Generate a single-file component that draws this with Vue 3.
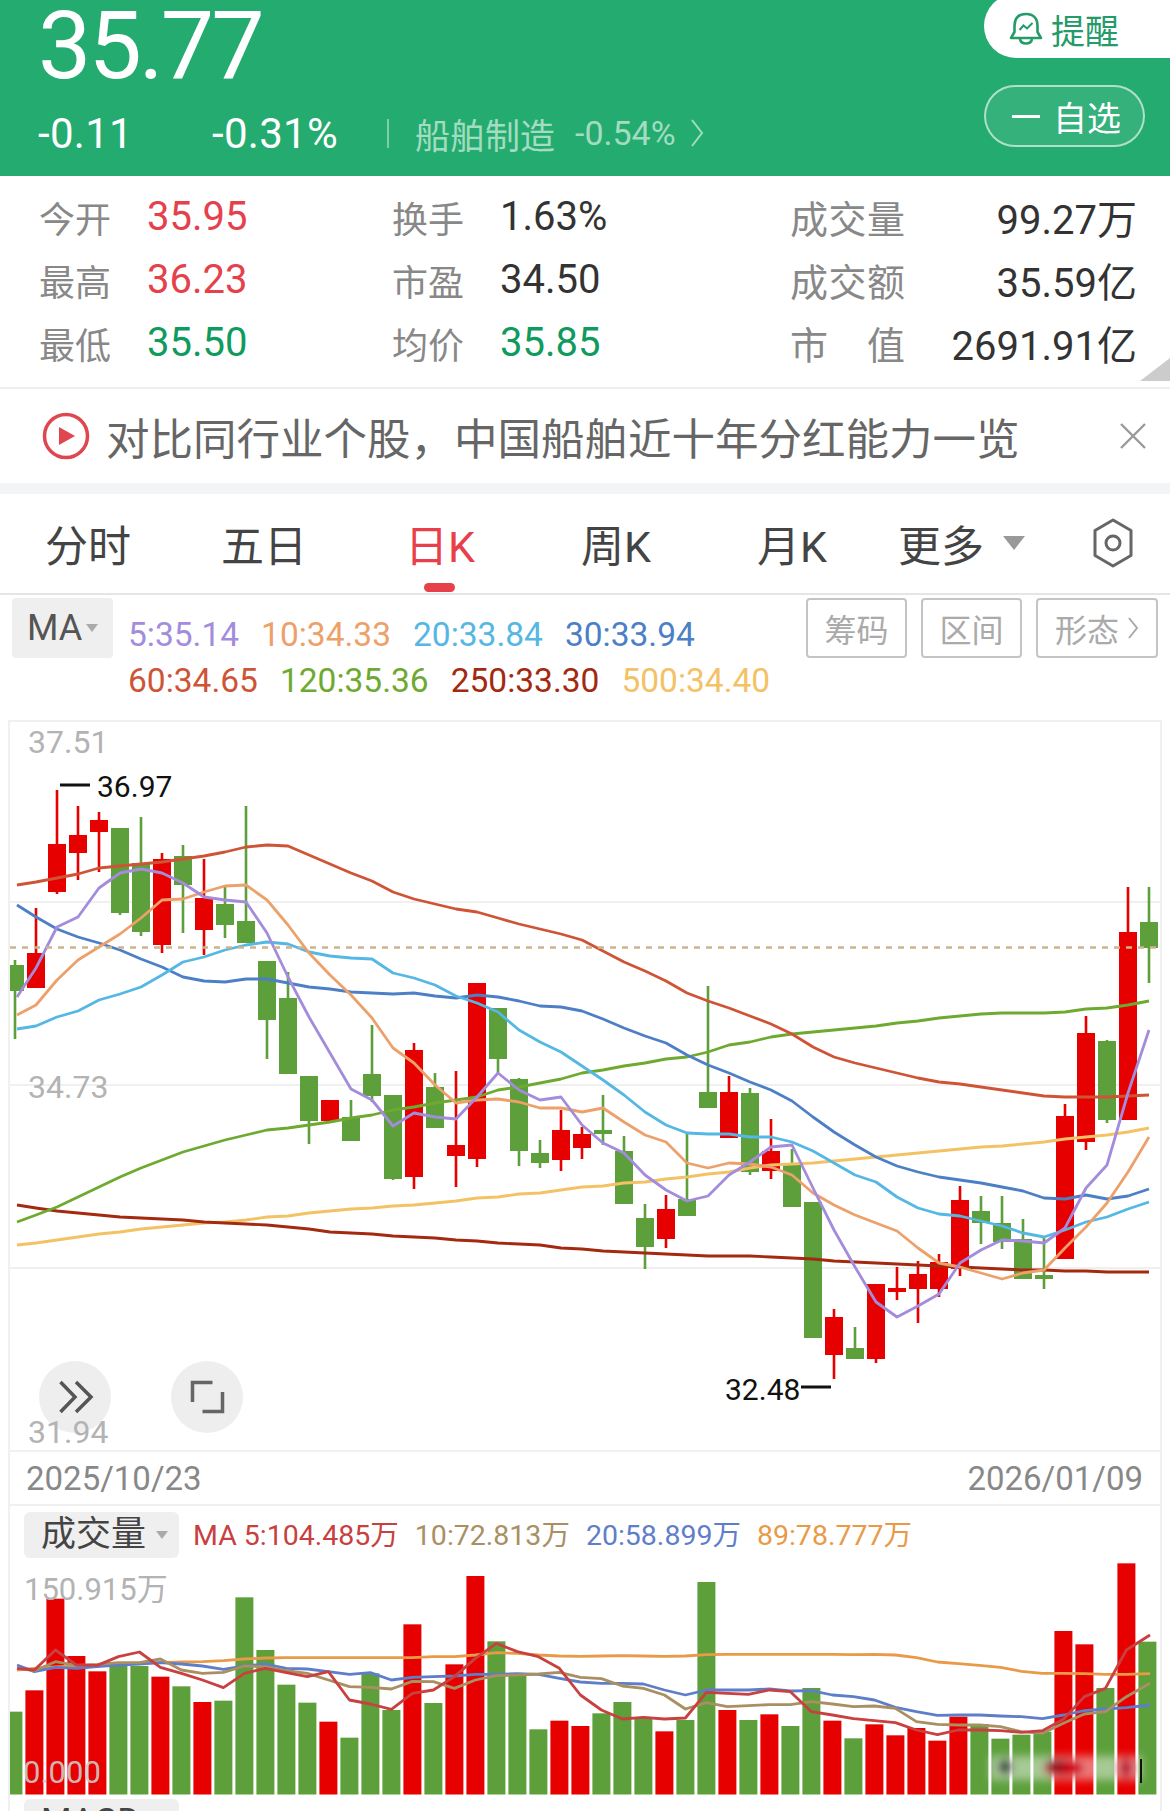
<script setup>
const stats = [
  [{ k: '今开', v: '35.95', c: 'red' }, { k: '换手', v: '1.63%', c: '' }, { k: '成交量', v: '99.27万', c: '' }],
  [{ k: '最高', v: '36.23', c: 'red' }, { k: '市盈', v: '34.50', c: '' }, { k: '成交额', v: '35.59亿', c: '' }],
  [{ k: '最低', v: '35.50', c: 'green' }, { k: '均价', v: '35.85', c: 'green' }, { k: '市值', v: '2691.91亿', c: '' }]
]
const tabs = ['分时', '五日', '日K', '周K', '月K']
const legendTop = [
  { t: '5:35.14', c: '#a48cdc' }, { t: '10:34.33', c: '#eda16a' },
  { t: '20:33.84', c: '#55b7e3' }, { t: '30:33.94', c: '#4c7fc5' }
]
const legendBottom = [
  { t: '60:34.65', c: '#cf5436' }, { t: '120:35.36', c: '#6daa2f' },
  { t: '250:33.30', c: '#a3290f' }, { t: '500:34.40', c: '#f3c265' }
]
const volLegend = [
  { t: 'MA 5:104.485万', c: '#c8403f' }, { t: '10:72.813万', c: '#a98f62' },
  { t: '20:58.899万', c: '#5f7ec9' }, { t: '89:78.777万', c: '#e89a48' }
]

const RED = '#e60000'
const GREEN = '#5c9f3b'

// bodyTop, bodyBottom, wickTop, wickBottom, up?
const candles = [
  [965, 991, 960, 1039, 0], [953, 988, 908, 988, 1], [844, 892, 790, 894, 1], [835, 853, 806, 880, 1],
  [820, 832, 812, 872, 1], [828, 913, 828, 915, 0], [863, 932, 817, 936, 0], [859, 945, 853, 953, 1],
  [856, 885, 845, 933, 0], [898, 930, 859, 955, 1], [904, 925, 885, 938, 0], [921, 943, 806, 943, 0],
  [961, 1020, 961, 1059, 0], [998, 1074, 972, 1074, 0], [1076, 1121, 1076, 1144, 0], [1100, 1121, 1100, 1123, 1],
  [1117, 1141, 1100, 1141, 0], [1074, 1096, 1025, 1102, 0], [1095, 1179, 1095, 1180, 0], [1050, 1177, 1043, 1189, 1],
  [1087, 1128, 1073, 1128, 0], [1145, 1156, 1071, 1187, 1], [983, 1159, 983, 1167, 1], [1008, 1059, 1008, 1073, 0],
  [1079, 1151, 1078, 1166, 0], [1153, 1163, 1140, 1168, 0], [1130, 1160, 1110, 1171, 1], [1134, 1148, 1127, 1159, 1],
  [1130, 1134, 1095, 1145, 0], [1151, 1204, 1136, 1204, 0], [1218, 1247, 1204, 1269, 0], [1209, 1239, 1195, 1248, 1],
  [1199, 1216, 1134, 1216, 0], [1092, 1108, 986, 1108, 0], [1092, 1138, 1076, 1138, 1], [1093, 1172, 1088, 1175, 0],
  [1151, 1171, 1119, 1179, 1], [1163, 1207, 1149, 1207, 0], [1202, 1338, 1202, 1338, 0], [1317, 1355, 1309, 1379, 1],
  [1348, 1359, 1327, 1359, 0], [1284, 1359, 1284, 1363, 1], [1288, 1292, 1267, 1300, 1], [1274, 1289, 1261, 1323, 1],
  [1262, 1289, 1254, 1297, 1], [1200, 1269, 1186, 1276, 1], [1211, 1223, 1196, 1244, 0], [1223, 1242, 1196, 1249, 0],
  [1239, 1279, 1219, 1279, 0], [1275, 1279, 1238, 1289, 0], [1116, 1259, 1104, 1259, 1], [1033, 1142, 1016, 1150, 1],
  [1041, 1120, 1040, 1123, 0], [932, 1120, 887, 1120, 1], [922, 948, 887, 983, 0]
]

const maLines = [
  { c: '#f3c265', y: [1245, 1243, 1240, 1237, 1234, 1232, 1229, 1227, 1225, 1223, 1222, 1220, 1217, 1216, 1213, 1211, 1209, 1208, 1206, 1205, 1203, 1201, 1198, 1197, 1194, 1193, 1190, 1187, 1186, 1183, 1182, 1179, 1177, 1174, 1172, 1168, 1165, 1164, 1163, 1161, 1159, 1157, 1155, 1153, 1151, 1149, 1147, 1146, 1144, 1142, 1139, 1137, 1135, 1132, 1128] },
  { c: '#a3290f', y: [1205, 1208, 1211, 1213, 1215, 1217, 1218, 1219, 1220, 1222, 1223, 1224, 1225, 1227, 1229, 1232, 1233, 1234, 1236, 1237, 1238, 1240, 1241, 1243, 1244, 1245, 1248, 1249, 1251, 1252, 1253, 1254, 1255, 1256, 1256, 1256, 1257, 1258, 1259, 1261, 1262, 1263, 1264, 1265, 1266, 1267, 1268, 1269, 1270, 1270, 1271, 1271, 1272, 1272, 1272] },
  { c: '#6daa2f', y: [1222, 1215, 1207, 1197, 1187, 1177, 1168, 1160, 1152, 1146, 1140, 1135, 1130, 1128, 1125, 1122, 1118, 1115, 1110, 1107, 1103, 1100, 1097, 1090, 1087, 1083, 1079, 1073, 1070, 1066, 1063, 1059, 1057, 1052, 1045, 1042, 1037, 1034, 1032, 1030, 1028, 1026, 1023, 1021, 1018, 1016, 1014, 1013, 1013, 1013, 1012, 1009, 1008, 1005, 1001] },
  { c: '#cf5436', y: [885, 882, 878, 874, 868, 866, 864, 862, 859, 856, 852, 847, 845, 846, 855, 864, 873, 881, 892, 899, 904, 909, 912, 918, 924, 929, 934, 940, 951, 962, 971, 981, 993, 1001, 1008, 1016, 1024, 1034, 1047, 1057, 1063, 1068, 1073, 1078, 1082, 1084, 1087, 1090, 1093, 1096, 1097, 1097, 1097, 1096, 1095] },
  { c: '#4c7fc5', y: [905, 917, 929, 937, 943, 950, 959, 967, 977, 981, 982, 979, 979, 983, 987, 989, 992, 993, 994, 993, 996, 998, 995, 997, 1001, 1006, 1007, 1011, 1019, 1028, 1036, 1043, 1055, 1065, 1073, 1082, 1090, 1101, 1117, 1132, 1145, 1157, 1166, 1172, 1177, 1180, 1183, 1187, 1191, 1198, 1199, 1195, 1199, 1196, 1189] },
  { c: '#55b7e3', y: [1029, 1026, 1017, 1011, 1000, 994, 987, 975, 962, 957, 950, 945, 942, 944, 952, 956, 958, 959, 973, 978, 985, 996, 1003, 1012, 1030, 1042, 1052, 1066, 1080, 1095, 1112, 1125, 1133, 1134, 1134, 1137, 1137, 1142, 1151, 1163, 1175, 1182, 1197, 1208, 1214, 1216, 1221, 1226, 1233, 1237, 1230, 1222, 1217, 1209, 1202] },
  { c: '#eda16a', y: [1015, 1005, 980, 960, 947, 934, 918, 900, 899, 892, 886, 885, 900, 925, 953, 975, 995, 1018, 1048, 1063, 1085, 1103, 1100, 1099, 1102, 1108, 1108, 1112, 1108, 1122, 1135, 1142, 1163, 1168, 1163, 1164, 1167, 1175, 1193, 1205, 1215, 1223, 1231, 1248, 1263, 1267, 1273, 1279, 1273, 1270, 1248, 1227, 1203, 1172, 1137] },
  { c: '#a48cdc', y: [997, 968, 927, 917, 888, 873, 869, 873, 883, 897, 900, 902, 933, 977, 1017, 1053, 1089, 1100, 1126, 1113, 1117, 1119, 1097, 1073, 1090, 1100, 1097, 1125, 1143, 1153, 1175, 1190, 1201, 1196, 1175, 1162, 1147, 1145, 1188, 1230, 1267, 1302, 1317, 1306, 1294, 1263, 1250, 1240, 1241, 1243, 1228, 1188, 1165, 1093, 1030] }
]

const volume = [
  [695, 0], [631, 1], [356, 1], [528, 1], [574, 1], [555, 0], [558, 0], [590, 1], [619, 0], [666, 1], [662, 0],
  [352, 0], [510, 0], [614, 0], [668, 0], [725, 1], [773, 0], [580, 0], [690, 0], [433, 1], [669, 0], [553, 1],
  [288, 1], [484, 0], [580, 0], [748, 0], [722, 1], [738, 1], [700, 0], [666, 0], [716, 0], [754, 1], [720, 0],
  [306, 0], [690, 1], [720, 0], [703, 1], [738, 0], [624, 0], [722, 1], [775, 0], [733, 1], [766, 1], [744, 1],
  [782, 1], [710, 1], [732, 0], [776, 0], [764, 0], [755, 0], [453, 1], [493, 1], [624, 0], [250, 1], [485, 0]
].map(([v, up]) => ({ top: 1480 + v / 3, up }))

const volLines = [
  { c: '#e89a48', v: [570, 565, 561, 558, 556, 552, 550, 548, 546, 545, 542, 537, 534, 533, 533, 533, 533, 533, 533, 533, 530, 530, 525, 518, 520, 525, 528, 529, 528, 527, 528, 529, 528, 524, 523, 523, 523, 523, 523, 523, 524, 523, 525, 533, 546, 551, 556, 562, 574, 580, 580, 581, 583, 583, 581] },
  { c: '#5f7ec9', v: [555, 575, 562, 565, 560, 555, 552, 548, 552, 558, 568, 558, 552, 565, 567, 575, 583, 578, 600, 592, 590, 588, 583, 583, 581, 583, 595, 606, 610, 610, 612, 630, 645, 630, 630, 630, 627, 633, 632, 645, 650, 660, 682, 695, 706, 705, 705, 708, 710, 716, 705, 692, 687, 683, 675] },
  { c: '#a98f62', v: [565, 572, 545, 556, 553, 548, 548, 537, 570, 580, 577, 558, 560, 572, 580, 600, 620, 622, 627, 604, 605, 625, 600, 587, 585, 582, 577, 592, 596, 618, 625, 645, 687, 668, 680, 677, 674, 674, 665, 672, 680, 678, 685, 725, 733, 735, 735, 740, 755, 760, 730, 702, 695, 650, 610] },
  { c: '#c8403f', v: [565, 570, 510, 555, 556, 530, 516, 562, 580, 600, 623, 580, 565, 578, 590, 575, 660, 672, 688, 640, 630, 590, 535, 490, 515, 530, 565, 645, 690, 717, 712, 717, 714, 637, 640, 643, 630, 635, 695, 705, 716, 722, 728, 750, 764, 750, 750, 752, 757, 752, 718, 650, 625, 510, 465] }
]

const candleX = i => 15 + 21 * i
const volX = i => 13.4 + 21 * i

const maPoints = ys => ys.map((y, i) => `${i === 0 ? 17 : candleX(i)},${y}`).join(' ')
const volPoints = vs => vs.map((v, i) => `${i === 0 ? 17 : i === 54 ? 1150 : volX(i)},${1480 + v / 3}`).join(' ')
</script>

<template>
  <div class="page">
    <header class="head">
      <div class="head-left">
        <div class="price">35.77</div>
        <div class="change">
          <span class="chg-a">-0.11</span>
          <span class="chg-b">-0.31%</span>
          <i class="vline"></i>
          <span class="sector">船舶制造</span>
          <span class="sector-pct">-0.54%</span>
          <svg class="chev" width="14" height="30" viewBox="0 0 14 30">
            <path d="M2 2 L12 15 L2 28" fill="none" stroke="#a3dcc0" stroke-width="2" />
          </svg>
        </div>
      </div>
      <div class="head-right">
        <div class="remind">
          <svg width="34" height="34" viewBox="0 0 34 34" fill="none" stroke="#249b68" stroke-width="2.6">
            <path d="M17 2 C8 2 5.5 8 5.5 14 V20 L2 26 H32 L28.5 20 V14 C28.5 8 26 2 17 2 Z" stroke-linejoin="round" />
            <path d="M11 27 C12 33 22 33 23 27" />
            <path d="M10.5 18 L14.5 13.5 L18 16.5 L23.5 11" stroke-width="2" />
          </svg>
          <span>提醒</span>
        </div>
        <div class="watch"><i class="minus"></i><span>自选</span></div>
      </div>
    </header>

    <section class="stats">
      <div v-for="(row, r) in stats" :key="r" class="stat-row">
        <div v-for="item in row" :key="item.k" class="stat">
          <span class="stat-k">{{ item.k }}</span>
          <span class="stat-v" :class="item.c">{{ item.v }}</span>
        </div>
      </div>
      <i class="corner"></i>
    </section>

    <section class="news">
      <svg width="48" height="48" viewBox="0 0 48 48">
        <circle cx="24" cy="24" r="21.5" fill="none" stroke="#e0464f" stroke-width="3.5" />
        <path d="M17 15 L33 24 L17 33 Z" fill="#e0464f" />
      </svg>
      <span class="news-text">对比同行业个股，中国船舶近十年分红能力一览</span>
      <svg class="news-close" width="26" height="26" viewBox="0 0 26 26">
        <path d="M1 1 L25 25 M25 1 L1 25" stroke="#999" stroke-width="2.4" />
      </svg>
    </section>
    <div class="band"></div>

    <nav class="tabs">
      <div v-for="t in tabs" :key="t" class="tab" :class="{ active: t === '日K' }">
        {{ t }}
        <i v-if="t === '日K'" class="tab-mark"></i>
      </div>
      <div class="tab more">更多<i class="tri big"></i></div>
      <svg class="gear" width="46" height="50" viewBox="0 0 46 50" fill="none" stroke="#666" stroke-width="3">
        <path d="M23 2 L41 12.500 V37.500 L23 48 L5 37.500 V12.500 Z" stroke-linejoin="round" />
        <circle cx="23" cy="25" r="7" />
      </svg>
    </nav>

    <section class="legend">
      <div class="ma-chip">MA<i class="tri"></i></div>
      <div class="ma-rows">
        <div class="ma-row">
          <span v-for="m in legendTop" :key="m.t" :style="{ color: m.c }">{{ m.t }}</span>
        </div>
        <div class="ma-row">
          <span v-for="m in legendBottom" :key="m.t" :style="{ color: m.c }">{{ m.t }}</span>
        </div>
      </div>
      <div class="tools">
        <div class="tool">筹码</div>
        <div class="tool">区间</div>
        <div class="tool wide">
          形态
          <svg width="12" height="24" viewBox="0 0 12 24">
            <path d="M2 2 L10 12 L2 22" fill="none" stroke="#aaa" stroke-width="2" />
          </svg>
        </div>
      </div>
    </section>

    <div class="frame">
      <svg class="kline" width="1150" height="728" viewBox="10 722 1150 728">
        <g stroke="#f0f0f0" stroke-width="2">
          <line x1="10" x2="1160" y1="902" y2="902" />
          <line x1="10" x2="1160" y1="1085" y2="1085" />
          <line x1="10" x2="1160" y1="1268" y2="1268" />
        </g>
        <g v-for="(c, i) in candles" :key="i" :fill="c[4] ? RED : GREEN">
          <rect :x="candleX(i) - 1.3" :y="c[2]" width="2.600" :height="c[3] - c[2]" />
          <rect :x="candleX(i) - 9" :y="c[0]" width="18" :height="c[1] - c[0]" />
        </g>
        <polyline v-for="l in maLines" :key="l.c" :points="maPoints(l.y)" fill="none" :stroke="l.c" stroke-width="2.800" stroke-linejoin="round" />
        <line x1="10" x2="1160" y1="947.500" y2="947.500" stroke="#cdb48c" stroke-width="2.500" stroke-dasharray="6 6" />

        <text x="28" y="753" class="axis">37.51</text>
        <text x="28" y="1098" class="axis">34.73</text>
        <text x="97" y="797" class="mark">36.97</text>
        <line x1="60" x2="90" y1="785" y2="785" stroke="#111" stroke-width="3" />
        <text x="725" y="1400" class="mark">32.48</text>
        <line x1="801" x2="831" y1="1387" y2="1387" stroke="#111" stroke-width="3" />

        <circle cx="75" cy="1397" r="36" fill="#eeeeee" />
        <circle cx="207" cy="1397" r="36" fill="#eeeeee" />
        <path d="M60.500 1382 L75 1397 L60.500 1412 M76 1382 L91 1397 L76 1412" fill="none" stroke="#555" stroke-width="3.500" />
        <path d="M192.500 1402 V1382.500 H212.500 M222.500 1392 V1411.500 H202.500" fill="none" stroke="#666" stroke-width="3.500" />
        <text x="28" y="1443" class="axis">31.94</text>
      </svg>

      <div class="dates">
        <span>2025/10/23</span>
        <span>2026/01/09</span>
      </div>

      <div class="vol-head">
        <div class="vol-chip">成交量<i class="tri"></i></div>
        <span v-for="m in volLegend" :key="m.t" :style="{ color: m.c }">{{ m.t }}</span>
      </div>

      <svg class="vol" width="1150" height="237" viewBox="10 1558 1150 237">
        <defs>
          <filter id="smear" x="-30%" y="-60%" width="160%" height="220%">
            <feGaussianBlur stdDeviation="4" />
          </filter>
        </defs>
        <rect v-for="(b, i) in volume" :key="i" :x="volX(i) - 9" :y="b.top" width="18" :height="1794.500 - b.top" :fill="b.up ? RED : GREEN" />
        <polyline v-for="l in volLines" :key="l.c" :points="volPoints(l.v)" fill="none" :stroke="l.c" stroke-width="2.800" stroke-linejoin="round" />
        <g filter="url(#smear)">
          <rect x="990" y="1756" width="152" height="24" fill="#fff" opacity="0.45" />
          <ellipse cx="1005" cy="1767" rx="8" ry="8" fill="#33502e" />
          <ellipse cx="1065" cy="1768" rx="22" ry="10" fill="#d4001a" />
          <ellipse cx="1055" cy="1766" rx="10" ry="7" fill="#8e1018" />
          <ellipse cx="1126" cy="1768" rx="9" ry="11" fill="#c22038" />
        </g>
        <line x1="1141" x2="1141" y1="1759" y2="1783" stroke="#111" stroke-width="2" />
        <text x="24" y="1600" class="axis vol-axis">150.915万</text>
        <text x="23" y="1783" class="axis zero">0.000</text>
      </svg>

      <div class="macd-chip">MACD</div>
    </div>
  </div>
</template>

<style scoped>
.page {
  width: 1170px;
  height: 1811px;
  overflow: hidden;
  background: #fff;
  font-family: Roboto, "Noto Sans CJK SC", sans-serif;
  color: #333;
}
i {
  display: block;
}
.head {
  height: 176px;
  background: #24ab70;
  display: flex;
  justify-content: space-between;
  color: #fff;
}
.head-left {
  padding-left: 38px;
}
.price {
  font-size: 95px;
  line-height: 91px;
  letter-spacing: -3px;
}
.change {
  display: flex;
  align-items: center;
  margin-top: 17px;
  height: 50px;
}
.chg-a,
.chg-b {
  font-size: 42px;
  letter-spacing: 0.3px;
}
.chg-a {
  width: 174px;
}
.chg-b {
  width: 175px;
}
.vline {
  width: 2px;
  height: 29px;
  background: #7fcca7;
}
.sector {
  margin-left: 26px;
  font-size: 35px;
  color: #a3dcc0;
}
.sector-pct {
  margin-left: 20px;
  font-size: 34px;
  color: #a3dcc0;
}
.chev {
  margin-left: 14px;
}
.head-right {
  width: 186px;
}
.remind {
  height: 64px;
  margin-top: -6px;
  background: #fff;
  border-radius: 32px 0 0 32px;
  display: flex;
  align-items: center;
  gap: 8px;
  padding: 6px 0 0 25px;
  box-sizing: border-box;
  color: #249b68;
  font-size: 34px;
}
.watch {
  width: 161px;
  height: 62px;
  margin-top: 27px;
  box-sizing: border-box;
  border: 2px solid rgba(255, 255, 255, 0.6);
  border-radius: 31px;
  background: rgba(255, 255, 255, 0.08);
  display: flex;
  align-items: center;
  gap: 13px;
  padding-left: 26px;
  font-size: 34px;
}
.minus {
  width: 28px;
  height: 3px;
  background: #fff;
}

.stats {
  position: relative;
  height: 213px;
  box-sizing: border-box;
  padding-top: 9px;
  border-bottom: 2px solid #eeeeee;
}
.stat-row {
  display: grid;
  grid-template-columns: 353px 398px 347px;
  height: 63px;
  padding-left: 39px;
}
.stat {
  display: flex;
  align-items: center;
}
.stat-k {
  width: 108px;
  font-size: 36px;
  color: #888;
}
.stat-v {
  font-size: 40px;
  color: #333;
}
.stat:nth-child(3) {
  justify-content: space-between;
}
.stat:nth-child(3) .stat-k {
  width: 115px;
  font-size: 38px;
  text-align-last: justify;
}
.stat-v.red {
  color: #e5414c;
}
.stat-v.green {
  color: #0f9a5e;
}
.corner {
  position: absolute;
  right: 0;
  bottom: 6px;
  width: 30px;
  height: 23px;
  background: #cccccc;
  clip-path: polygon(100% 0, 100% 100%, 0 100%);
}

.news {
  height: 94px;
  display: flex;
  align-items: center;
  padding-left: 42px;
  gap: 16px;
}
.news-text {
  font-size: 43.500px;
  color: #666;
  white-space: nowrap;
}
.news-close {
  margin-left: 84px;
}
.band {
  height: 11px;
  background: #f2f4f6;
}

.tabs {
  position: relative;
  height: 101px;
  box-sizing: border-box;
  border-bottom: 2px solid #e5e5e5;
  display: flex;
  align-items: center;
  padding-bottom: 2px;
}
.tab {
  position: relative;
  width: 176px;
  text-align: center;
  font-size: 43px;
  color: #444;
}
.tab.active {
  color: #e8404a;
}
.tab-mark {
  position: absolute;
  left: 72px;
  bottom: -18px;
  width: 31px;
  height: 9px;
  border-radius: 5px;
  background: #e8404a;
}
.more {
  display: flex;
  align-items: center;
  width: 190px;
  padding-left: 18px;
  box-sizing: border-box;
}
.tri {
  width: 0;
  height: 0;
  border-left: 6px solid transparent;
  border-right: 6px solid transparent;
  border-top: 8px solid #aaa;
  margin-left: 4px;
}
.tri.big {
  border-left-width: 11px;
  border-right-width: 11px;
  border-top-width: 14px;
  border-top-color: #999;
  margin-left: 19px;
}
.gear {
  margin-left: 20px;
}

.legend {
  height: 125px;
  display: flex;
  padding: 3px 12px 0;
  box-sizing: border-box;
}
.ma-chip {
  width: 101px;
  height: 60px;
  background: #efefef;
  border-radius: 4px;
  display: flex;
  align-items: center;
  padding-left: 15px;
  box-sizing: border-box;
  font-size: 36px;
  color: #555;
}
.ma-rows {
  margin: 13px 0 0 15px;
}
.ma-row {
  display: flex;
  gap: 22px;
  height: 46px;
  align-items: center;
  font-size: 33.500px;
}
.tools {
  margin-left: auto;
  display: flex;
  gap: 14px;
}
.tool {
  width: 101px;
  height: 60px;
  box-sizing: border-box;
  border: 2px solid #c4c4c4;
  border-radius: 4px;
  display: flex;
  align-items: center;
  justify-content: center;
  gap: 8px;
  font-size: 32px;
  color: #aaa;
}
.tool.wide {
  width: 122px;
}

.frame {
  margin-left: 8px;
  width: 1154px;
  box-sizing: border-box;
  border: solid #f0f0f0;
  border-width: 2px 2px 0;
  height: 1091px;
}
.kline,
.vol {
  display: block;
}
.axis {
  font-family: Roboto, sans-serif;
  font-size: 32px;
  fill: #b3b3b3;
}
.vol-axis {
  font-family: Roboto, "Noto Sans CJK SC", sans-serif;
  font-size: 31px;
}
.zero {
  font-size: 31px;
  fill: rgba(205, 205, 205, 0.9);
}
.mark {
  font-family: Roboto, sans-serif;
  font-size: 30px;
  fill: #111;
}
.dates {
  height: 56px;
  box-sizing: border-box;
  border-top: 2px solid #f0f0f0;
  border-bottom: 2px solid #f0f0f0;
  display: flex;
  justify-content: space-between;
  align-items: center;
  padding: 0 17px 0 16px;
  font-size: 33px;
  color: #888;
}
.vol-head {
  height: 52px;
  display: flex;
  align-items: flex-end;
  gap: 16px;
  padding-left: 14px;
  font-size: 28.500px;
  line-height: 44px;
}
.vol-chip {
  width: 155px;
  height: 46px;
  margin-right: -2px;
  background: #efefef;
  border-radius: 6px;
  display: flex;
  align-items: center;
  padding-left: 17px;
  box-sizing: border-box;
  font-size: 35px;
  color: #444;
}
.vol-chip .tri {
  margin-left: 10px;
}
.macd-chip {
  width: 155px;
  height: 46px;
  margin: 4px 0 0 14px;
  padding-left: 17px;
  box-sizing: border-box;
  background: #efefef;
  border-radius: 6px;
  font-size: 35px;
  line-height: 46px;
  color: #444;
}
</style>
